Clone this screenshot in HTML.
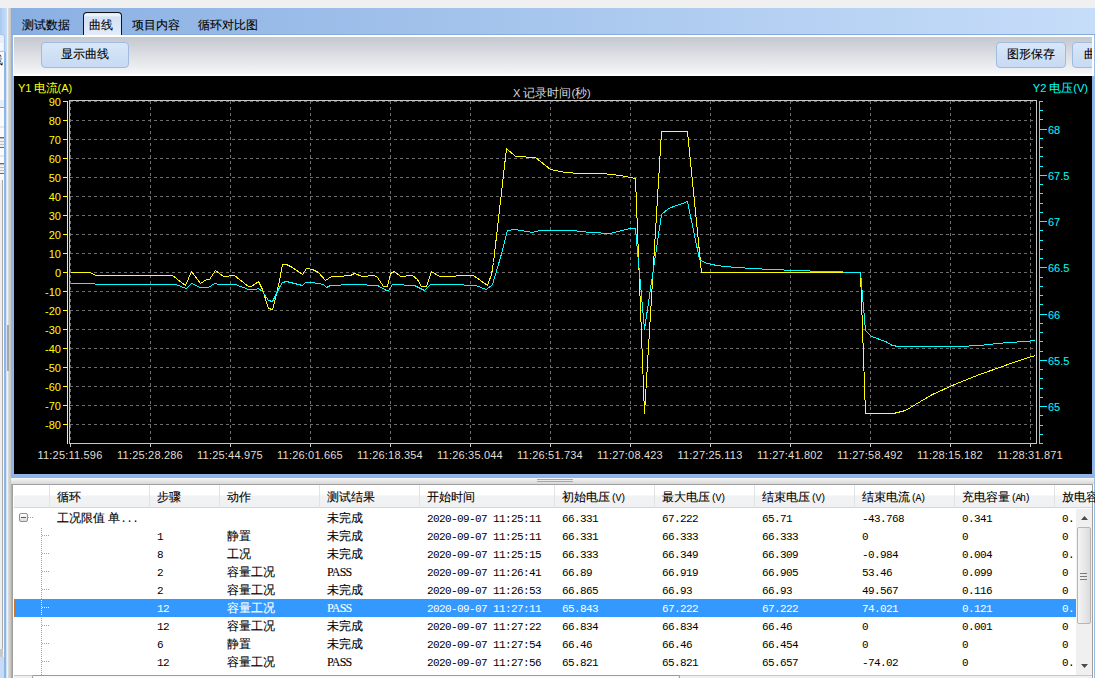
<!DOCTYPE html>
<html><head><meta charset="utf-8"><style>
*{margin:0;padding:0;box-sizing:border-box}
body .hc,body .dc,body .tab,body .btn{-webkit-text-stroke:0.1px currentColor}
body .m,body .m2,body .m3{-webkit-text-stroke:0}
html,body{width:1095px;height:678px;overflow:hidden;background:#f0f0f0;font-family:"Liberation Sans",sans-serif;font-size:12px;color:#000;position:relative}
.abs{position:absolute}
#leftstrip{position:absolute;left:0;top:8px;width:11px;height:670px;background:#dfe9f5}
#tabbar{position:absolute;left:11px;top:8px;width:1084px;height:27px;background:linear-gradient(90deg,#8ab0e2 0%,#c6ddf9 100%);border-bottom:1px solid #86abde}
.tab{position:absolute;top:18px;font-size:12px;line-height:14px;color:#000;font-weight:500}
#seltab{position:absolute;left:83px;top:12px;width:39px;height:24px;border:1px solid #101418;border-bottom:none;border-radius:4px 4px 0 0;background:linear-gradient(#d6e4f6 0,#f4f8fd 2px,#d4e2f5 4px,#e4ebf7 100%)}
#panel{position:absolute;left:11px;top:35px;width:1084px;height:643px;background:#fff;border-left:2px solid #8fb5e6;border-right:1px solid #9cbce6}
#toolbar{position:absolute;overflow:hidden;left:14px;top:35px;width:1078px;height:41px;background:linear-gradient(#ffffff 0px,#ffffff 2px,#c4c8cf 2px,#d9dce1 18px,#f5f6f8 39px,#ffffff 39px)}
.btn{position:absolute;top:7px;height:26px;font-weight:500;border:1px solid #9fbbe0;border-radius:4px;background:linear-gradient(#d9e7f8,#c6daf2);font-size:12px;line-height:23px;text-align:center;color:#000}
#chartframe{position:absolute;left:11px;top:76px;width:1083px;height:402px;background:#8fb5e6}
svg{position:absolute;left:0;top:0}
.g{stroke:#6c6c6c;stroke-width:1;stroke-dasharray:3 3}
text{font-family:"Liberation Sans",sans-serif;font-size:11px}
.y1{fill:#ffff00;text-anchor:end}
.y2{fill:#00ffff}
.xl{fill:#e0ddd0;text-anchor:middle;letter-spacing:0.2px}
.t1{fill:#ffff00;font-size:11px}
.t2{fill:#00ffff;text-anchor:end;font-size:11px}
.tt{fill:#d8d8d8;font-size:11px}
.cj{font-size:12px}
#splitter{position:absolute;left:11px;top:478px;width:1083px;height:6px;background:linear-gradient(#f6f6f6,#d8d8d8)}
#grip1,#grip2{position:absolute;left:526px;width:36px;height:1px;background:#a8a8a8}
#table{position:absolute;left:12px;top:484px;width:1081px;height:194px;background:#fff;border:1px solid #a0a0a0;border-bottom:none;overflow:hidden}
#thead{position:absolute;left:14px;top:485px;width:1078px;height:23px;background:linear-gradient(#ffffff 0%,#ffffff 45%,#f1f2f4 50%,#f0f1f3 100%);border-bottom:1px solid #d5d5d5}
.hc{position:absolute;top:485px;height:23px;border-left:1px solid #e2e3e6;padding-left:7px;line-height:25px;font-size:12px;white-space:nowrap;overflow:hidden}
.dc{position:absolute;height:18px;line-height:18px;font-size:12px;white-space:nowrap}
.sel{position:absolute;left:14px;width:1062px;height:18px;background:#3399ff}
.w{color:#fff}
.ps{font-family:"Liberation Serif",serif;font-size:12px;letter-spacing:-0.8px;margin-top:0px}
.m3{font-family:"Liberation Mono",monospace;font-size:11px;letter-spacing:-0.6px}
.m2{font-family:"Liberation Mono",monospace;font-size:10px;letter-spacing:-1.5px;margin-left:1px}
.m{font-family:"Liberation Mono",monospace;font-size:11px;letter-spacing:-0.6px;margin-top:1px}
.minus{position:absolute;left:19px;top:513px;width:9px;height:9px;border:1px solid #8e8f8f;border-radius:2px;background:linear-gradient(#fff,#dcdcdc)}
.minus:after{content:"";position:absolute;left:1px;top:3px;width:5px;height:1px;background:#3c5fa8}
.dotv{position:absolute;width:1px;background:repeating-linear-gradient(#a0a0a0 0 1px,transparent 1px 2px)}
.doth{position:absolute;height:1px;background:repeating-linear-gradient(90deg,#a0a0a0 0 1px,transparent 1px 2px)}
#vscroll{position:absolute;left:1076px;top:509px;width:16px;height:166px;background:#f0f0f0}
#thumb{position:absolute;left:1077px;top:527px;width:14px;height:97px;border:1px solid #b5b5b5;border-radius:2px;background:linear-gradient(90deg,#f5f5f5,#dcdcdc)}
#hscroll{position:absolute;left:14px;top:675px;width:1078px;height:3px;background:#f0f0f0;border-top:1px solid #c8c8c8}
#hthumb{position:absolute;left:32px;top:675px;width:648px;height:4px;border:1px solid #9a9a9a;border-bottom:none;border-radius:2px 2px 0 0;background:#fafafa}
</style></head><body>
<div class="abs" style="left:0;top:8px;width:7px;height:670px;background:linear-gradient(90deg,#a9c9f1,#c9def8)"></div>
<div class="abs" style="left:0;top:34px;width:5px;height:18px;background:#e6eef8;border:1px solid #a8c4e8;border-left:none;border-radius:0 3px 0 0"></div>
<div class="abs" style="left:0;top:43px;width:3px;height:7px;background:#f4f8fc"></div>
<div class="abs" style="left:0;top:52px;width:4px;height:626px;background:#fafafa"></div>
<div class="abs" style="left:0;top:180px;width:3px;height:469px;background:#f0f0f0;border-right:1px solid #a8a8a8"></div>
<div class="abs" style="left:4px;top:52px;width:2px;height:626px;background:#8fb5e6"></div>
<div class="abs" style="left:6px;top:52px;width:1px;height:626px;background:#cfe3fb"></div>
<div class="abs" style="left:7px;top:8px;width:4px;height:670px;background:linear-gradient(90deg,#f6f3ef 0,#f6f3ef 1px,#dedede 1px,#c4c1bd 4px)"></div>
<div class="abs" style="left:0;top:52px;width:3px;height:16px;font-size:12px;line-height:16px;overflow:hidden;direction:rtl">线</div>
<div class="abs" style="left:0;top:100px;width:4px;height:8px;background:#e6eef8;border-bottom:1px solid #a0a0a0"></div>
<div class="abs" style="left:0;top:126px;width:4px;height:2px;background:#dfe8f3"></div>
<div class="abs" style="left:0;top:137px;width:4px;height:11px;background:repeating-linear-gradient(#c0c0c0 0 1px,#f0f0f0 1px 3px);border-top:1px solid #806060;border-bottom:1px solid #806060"></div>
<div class="abs" style="left:0;top:155px;width:4px;height:2px;background:#dfe8f3"></div>
<div class="abs" style="left:0;top:163px;width:4px;height:11px;background:repeating-linear-gradient(#c0c0c0 0 1px,#f0f0f0 1px 3px);border-top:1px solid #806060;border-bottom:1px solid #806060"></div>
<div class="abs" style="left:7px;top:325px;width:2px;height:46px;background:#a8a8a8"></div>
<div class="abs" style="left:0;top:649px;width:3px;height:8px;background:#c8c8c8"></div>
<div class="abs" style="left:0;top:657px;width:4px;height:21px;background:#c6dbf6"></div>
<div class="abs" style="left:1092px;top:35px;width:3px;height:443px;background:linear-gradient(90deg,#c8e0fc 0,#c8e0fc 1px,#9cc0ec 1px,#9cc0ec 2px,#c4dcf8 2px)"></div>
<div id="tabbar"></div>
<div id="seltab"></div>
<div class="tab" style="left:22px">测试数据</div>
<div class="tab" style="left:89px">曲线</div>
<div class="tab" style="left:132px">项目内容</div>
<div class="tab" style="left:198px">循环对比图</div>
<div id="panel"></div>
<div id="toolbar"><div class="btn" style="left:27px;width:88px">显示曲线</div>
<div class="btn" style="left:982px;width:70px">图形保存</div>
<div class="btn" style="left:1058px;width:40px;text-align:left;padding-left:11px">曲线</div></div>
<div id="chartframe"></div>
<svg width="1095" height="678" viewBox="0 0 1095 678">
<rect x="14" y="76" width="1078" height="398" fill="#000"/>
<line x1="70" y1="101.5" x2="1036" y2="101.5" class="g"/>
<line x1="70" y1="120.5" x2="1036" y2="120.5" class="g"/>
<line x1="70" y1="139.5" x2="1036" y2="139.5" class="g"/>
<line x1="70" y1="158.5" x2="1036" y2="158.5" class="g"/>
<line x1="70" y1="177.5" x2="1036" y2="177.5" class="g"/>
<line x1="70" y1="196.5" x2="1036" y2="196.5" class="g"/>
<line x1="70" y1="215.5" x2="1036" y2="215.5" class="g"/>
<line x1="70" y1="234.5" x2="1036" y2="234.5" class="g"/>
<line x1="70" y1="253.5" x2="1036" y2="253.5" class="g"/>
<line x1="70" y1="272.5" x2="1036" y2="272.5" class="g"/>
<line x1="70" y1="291.5" x2="1036" y2="291.5" class="g"/>
<line x1="70" y1="310.5" x2="1036" y2="310.5" class="g"/>
<line x1="70" y1="329.5" x2="1036" y2="329.5" class="g"/>
<line x1="70" y1="348.5" x2="1036" y2="348.5" class="g"/>
<line x1="70" y1="367.5" x2="1036" y2="367.5" class="g"/>
<line x1="70" y1="386.5" x2="1036" y2="386.5" class="g"/>
<line x1="70" y1="405.5" x2="1036" y2="405.5" class="g"/>
<line x1="70" y1="424.5" x2="1036" y2="424.5" class="g"/>
<line x1="70.5" y1="101" x2="70.5" y2="443" class="g"/>
<line x1="150.5" y1="101" x2="150.5" y2="443" class="g"/>
<line x1="230.5" y1="101" x2="230.5" y2="443" class="g"/>
<line x1="310.5" y1="101" x2="310.5" y2="443" class="g"/>
<line x1="390.5" y1="101" x2="390.5" y2="443" class="g"/>
<line x1="470.5" y1="101" x2="470.5" y2="443" class="g"/>
<line x1="550.5" y1="101" x2="550.5" y2="443" class="g"/>
<line x1="630.5" y1="101" x2="630.5" y2="443" class="g"/>
<line x1="710.5" y1="101" x2="710.5" y2="443" class="g"/>
<line x1="790.5" y1="101" x2="790.5" y2="443" class="g"/>
<line x1="870.5" y1="101" x2="870.5" y2="443" class="g"/>
<line x1="950.5" y1="101" x2="950.5" y2="443" class="g"/>
<line x1="1030.5" y1="101" x2="1030.5" y2="443" class="g"/>
<rect x="69.5" y="100.5" width="967" height="343" fill="none" stroke="#c8c8c8" stroke-width="1"/>
<line x1="67.5" y1="101" x2="67.5" y2="444" stroke="#ffff00"/>
<line x1="63" y1="101.5" x2="67" y2="101.5" stroke="#ffff00"/>
<text x="61" y="106.0" class="y1">90</text>
<line x1="63" y1="120.5" x2="67" y2="120.5" stroke="#ffff00"/>
<text x="61" y="125.0" class="y1">80</text>
<line x1="63" y1="139.5" x2="67" y2="139.5" stroke="#ffff00"/>
<text x="61" y="144.0" class="y1">70</text>
<line x1="63" y1="158.5" x2="67" y2="158.5" stroke="#ffff00"/>
<text x="61" y="163.0" class="y1">60</text>
<line x1="63" y1="177.5" x2="67" y2="177.5" stroke="#ffff00"/>
<text x="61" y="182.0" class="y1">50</text>
<line x1="63" y1="196.5" x2="67" y2="196.5" stroke="#ffff00"/>
<text x="61" y="201.0" class="y1">40</text>
<line x1="63" y1="215.5" x2="67" y2="215.5" stroke="#ffff00"/>
<text x="61" y="220.0" class="y1">30</text>
<line x1="63" y1="234.5" x2="67" y2="234.5" stroke="#ffff00"/>
<text x="61" y="239.0" class="y1">20</text>
<line x1="63" y1="253.5" x2="67" y2="253.5" stroke="#ffff00"/>
<text x="61" y="258.0" class="y1">10</text>
<line x1="63" y1="272.5" x2="67" y2="272.5" stroke="#ffff00"/>
<text x="61" y="277.0" class="y1">0</text>
<line x1="63" y1="291.5" x2="67" y2="291.5" stroke="#ffff00"/>
<text x="61" y="296.0" class="y1">-10</text>
<line x1="63" y1="310.5" x2="67" y2="310.5" stroke="#ffff00"/>
<text x="61" y="315.0" class="y1">-20</text>
<line x1="63" y1="329.5" x2="67" y2="329.5" stroke="#ffff00"/>
<text x="61" y="334.0" class="y1">-30</text>
<line x1="63" y1="348.5" x2="67" y2="348.5" stroke="#ffff00"/>
<text x="61" y="353.0" class="y1">-40</text>
<line x1="63" y1="367.5" x2="67" y2="367.5" stroke="#ffff00"/>
<text x="61" y="372.0" class="y1">-50</text>
<line x1="63" y1="386.5" x2="67" y2="386.5" stroke="#ffff00"/>
<text x="61" y="391.0" class="y1">-60</text>
<line x1="63" y1="405.5" x2="67" y2="405.5" stroke="#ffff00"/>
<text x="61" y="410.0" class="y1">-70</text>
<line x1="63" y1="424.5" x2="67" y2="424.5" stroke="#ffff00"/>
<text x="61" y="429.0" class="y1">-80</text>
<line x1="70.5" y1="444" x2="70.5" y2="447" stroke="#c8c8c8"/>
<line x1="150.5" y1="444" x2="150.5" y2="447" stroke="#c8c8c8"/>
<line x1="230.5" y1="444" x2="230.5" y2="447" stroke="#c8c8c8"/>
<line x1="310.5" y1="444" x2="310.5" y2="447" stroke="#c8c8c8"/>
<line x1="390.5" y1="444" x2="390.5" y2="447" stroke="#c8c8c8"/>
<line x1="470.5" y1="444" x2="470.5" y2="447" stroke="#c8c8c8"/>
<line x1="550.5" y1="444" x2="550.5" y2="447" stroke="#c8c8c8"/>
<line x1="630.5" y1="444" x2="630.5" y2="447" stroke="#c8c8c8"/>
<line x1="710.5" y1="444" x2="710.5" y2="447" stroke="#c8c8c8"/>
<line x1="790.5" y1="444" x2="790.5" y2="447" stroke="#c8c8c8"/>
<line x1="870.5" y1="444" x2="870.5" y2="447" stroke="#c8c8c8"/>
<line x1="950.5" y1="444" x2="950.5" y2="447" stroke="#c8c8c8"/>
<line x1="1030.5" y1="444" x2="1030.5" y2="447" stroke="#c8c8c8"/>
<text x="70" y="459" class="xl">11:25:11.596</text>
<text x="150" y="459" class="xl">11:25:28.286</text>
<text x="230" y="459" class="xl">11:25:44.975</text>
<text x="310" y="459" class="xl">11:26:01.665</text>
<text x="390" y="459" class="xl">11:26:18.354</text>
<text x="470" y="459" class="xl">11:26:35.044</text>
<text x="550" y="459" class="xl">11:26:51.734</text>
<text x="630" y="459" class="xl">11:27:08.423</text>
<text x="710" y="459" class="xl">11:27:25.113</text>
<text x="790" y="459" class="xl">11:27:41.802</text>
<text x="870" y="459" class="xl">11:27:58.492</text>
<text x="950" y="459" class="xl">11:28:15.182</text>
<text x="1030" y="459" class="xl">11:28:31.871</text>
<line x1="1039.5" y1="101" x2="1039.5" y2="444" stroke="#00ffff"/>
<line x1="1039" y1="101.5" x2="1043" y2="101.5" stroke="#00ffff"/>
<line x1="1039" y1="110.5" x2="1043" y2="110.5" stroke="#00ffff"/>
<line x1="1039" y1="119.5" x2="1043" y2="119.5" stroke="#00ffff"/>
<line x1="1039" y1="129.5" x2="1047" y2="129.5" stroke="#00ffff"/>
<text x="1048" y="134.0" class="y2">68</text>
<line x1="1039" y1="138.5" x2="1043" y2="138.5" stroke="#00ffff"/>
<line x1="1039" y1="147.5" x2="1043" y2="147.5" stroke="#00ffff"/>
<line x1="1039" y1="156.5" x2="1043" y2="156.5" stroke="#00ffff"/>
<line x1="1039" y1="166.5" x2="1043" y2="166.5" stroke="#00ffff"/>
<line x1="1039" y1="175.5" x2="1047" y2="175.5" stroke="#00ffff"/>
<text x="1048" y="180.0" class="y2">67.5</text>
<line x1="1039" y1="184.5" x2="1043" y2="184.5" stroke="#00ffff"/>
<line x1="1039" y1="193.5" x2="1043" y2="193.5" stroke="#00ffff"/>
<line x1="1039" y1="203.5" x2="1043" y2="203.5" stroke="#00ffff"/>
<line x1="1039" y1="212.5" x2="1043" y2="212.5" stroke="#00ffff"/>
<line x1="1039" y1="221.5" x2="1047" y2="221.5" stroke="#00ffff"/>
<text x="1048" y="226.0" class="y2">67</text>
<line x1="1039" y1="230.5" x2="1043" y2="230.5" stroke="#00ffff"/>
<line x1="1039" y1="240.5" x2="1043" y2="240.5" stroke="#00ffff"/>
<line x1="1039" y1="249.5" x2="1043" y2="249.5" stroke="#00ffff"/>
<line x1="1039" y1="258.5" x2="1043" y2="258.5" stroke="#00ffff"/>
<line x1="1039" y1="267.5" x2="1047" y2="267.5" stroke="#00ffff"/>
<text x="1048" y="272.0" class="y2">66.5</text>
<line x1="1039" y1="277.5" x2="1043" y2="277.5" stroke="#00ffff"/>
<line x1="1039" y1="286.5" x2="1043" y2="286.5" stroke="#00ffff"/>
<line x1="1039" y1="295.5" x2="1043" y2="295.5" stroke="#00ffff"/>
<line x1="1039" y1="304.5" x2="1043" y2="304.5" stroke="#00ffff"/>
<line x1="1039" y1="314.5" x2="1047" y2="314.5" stroke="#00ffff"/>
<text x="1048" y="319.0" class="y2">66</text>
<line x1="1039" y1="323.5" x2="1043" y2="323.5" stroke="#00ffff"/>
<line x1="1039" y1="332.5" x2="1043" y2="332.5" stroke="#00ffff"/>
<line x1="1039" y1="341.5" x2="1043" y2="341.5" stroke="#00ffff"/>
<line x1="1039" y1="351.5" x2="1043" y2="351.5" stroke="#00ffff"/>
<line x1="1039" y1="360.5" x2="1047" y2="360.5" stroke="#00ffff"/>
<text x="1048" y="365.0" class="y2">65.5</text>
<line x1="1039" y1="369.5" x2="1043" y2="369.5" stroke="#00ffff"/>
<line x1="1039" y1="378.5" x2="1043" y2="378.5" stroke="#00ffff"/>
<line x1="1039" y1="388.5" x2="1043" y2="388.5" stroke="#00ffff"/>
<line x1="1039" y1="397.5" x2="1043" y2="397.5" stroke="#00ffff"/>
<line x1="1039" y1="406.5" x2="1047" y2="406.5" stroke="#00ffff"/>
<text x="1048" y="411.0" class="y2">65</text>
<line x1="1039" y1="415.5" x2="1043" y2="415.5" stroke="#00ffff"/>
<line x1="1039" y1="425.5" x2="1043" y2="425.5" stroke="#00ffff"/>
<line x1="1039" y1="434.5" x2="1043" y2="434.5" stroke="#00ffff"/>
<line x1="1039" y1="443.5" x2="1043" y2="443.5" stroke="#00ffff"/>
<text x="18" y="92" class="t1">Y1 <tspan class="cj" dx="-1">电流</tspan>(A)</text>
<text x="1088" y="92" class="t2">Y2 <tspan class="cj">电压</tspan>(V)</text>
<text x="513" y="97" class="tt">X <tspan class="cj">记录时间</tspan>(<tspan class="cj">秒</tspan>)</text>
<polyline points="70.5,272.5 90.5,272.5 95.5,275.5 172.5,275.5 181.5,282.5 185.5,285.5 191.5,271.5 200.5,283.5 206.5,279.5 209.5,279.5 215.5,270.5 223.5,276.5 234.5,275.5 248.5,286.5 251.5,286.5 258.5,281.5 262.5,289.5 268.5,308.5 272.5,309.5 275.5,298.5 279.5,280.5 282.5,264.5 286.5,264.5 292.5,267.5 302.5,274.5 306.5,268.5 312.5,269.5 318.5,272.5 325.5,280.5 331.5,276.5 337.5,276.5 350.5,275.5 354.5,273.5 362.5,276.5 374.5,275.5 377.5,277.5 383.5,286.5 387.5,286.5 390.5,273.5 394.5,271.5 400.5,276.5 412.5,275.5 417.5,279.5 421.5,286.5 426.5,286.5 431.5,271.5 439.5,276.5 473.5,275.5 487.5,285.5 491.5,274.5 493.5,262.5 506.5,148.5 515.5,156.5 535.5,157.5 550.5,169.5 565.5,172.5 580.5,173.5 602.5,173.5 620.5,175.5 635.5,178.5 644.5,413.5 661.5,131.5 687.5,131.5 701.5,272.5 860.5,272.5 865.5,413.5 893.5,413.5 905.5,410.5 920.5,401.5 932.5,394.5 954.5,384.5 979.5,374.5 1002.5,366.5 1013.5,362.5 1028.5,357.5 1035.5,355.5" fill="none" stroke="#ffff00" stroke-width="1" shape-rendering="crispEdges"/>
<polyline points="70.5,283.5 94.5,283.5 95.5,284.5 175.5,284.5 186.5,288.5 191.5,283.5 200.5,287.5 208.5,287.5 214.5,283.5 219.5,284.5 235.5,284.5 248.5,289.5 255.5,289.5 258.5,288.5 262.5,291.5 268.5,300.5 272.5,301.5 279.5,287.5 282.5,282.5 286.5,281.5 302.5,285.5 305.5,282.5 312.5,282.5 323.5,284.5 326.5,287.5 330.5,285.5 352.5,284.5 355.5,284.5 377.5,285.5 386.5,290.5 388.5,290.5 392.5,284.5 414.5,285.5 424.5,290.5 430.5,284.5 452.5,284.5 475.5,285.5 486.5,289.5 492.5,284.5 500.5,257.5 507.5,230.5 515.5,229.5 532.5,232.5 539.5,230.5 572.5,230.5 590.5,232.5 610.5,233.5 625.5,229.5 630.5,228.5 635.5,228.5 644.5,329.5 661.5,214.5 668.5,208.5 676.5,205.5 682.5,203.5 687.5,201.5 699.5,259.5 704.5,262.5 711.5,264.5 723.5,266.5 751.5,268.5 771.5,269.5 795.5,270.5 824.5,271.5 860.5,272.5 865.5,330.5 871.5,336.5 885.5,341.5 892.5,345.5 898.5,346.5 959.5,346.5 979.5,345.5 997.5,343.5 1009.5,342.5 1025.5,341.5 1035.5,340.5" fill="none" stroke="#00ffff" stroke-width="1" shape-rendering="crispEdges"/>
</svg>
<div id="splitter"><div id="grip1" style="top:1px"></div><div id="grip2" style="top:3px"></div></div>
<div id="table"></div>
<div id="thead"></div>
<div class="hc" style="left:49px;width:100px">循环</div>
<div class="hc" style="left:149px;width:70px">步骤</div>
<div class="hc" style="left:219px;width:100px">动作</div>
<div class="hc" style="left:319px;width:100px">测试结果</div>
<div class="hc" style="left:419px;width:135px">开始时间</div>
<div class="hc" style="left:554px;width:100px">初始电压<span class="m2">(V)</span></div>
<div class="hc" style="left:654px;width:100px">最大电压<span class="m2">(V)</span></div>
<div class="hc" style="left:754px;width:100px">结束电压<span class="m2">(V)</span></div>
<div class="hc" style="left:854px;width:100px">结束电流<span class="m2">(A)</span></div>
<div class="hc" style="left:954px;width:100px">充电容量<span class="m2">(Ah)</span></div>
<div class="hc" style="left:1054px;width:106px">放电容量</div>
<div class="dc" style="left:57px;top:509px">工况限值 单<span class="m3">...</span></div>
<div class="dc" style="left:327px;top:509px">未完成</div>
<div class="dc m" style="left:427px;top:509px">2020-09-07 11:25:11</div>
<div class="dc m" style="left:562px;top:509px">66.331</div>
<div class="dc m" style="left:662px;top:509px">67.222</div>
<div class="dc m" style="left:762px;top:509px">65.71</div>
<div class="dc m" style="left:862px;top:509px">-43.768</div>
<div class="dc m" style="left:962px;top:509px">0.341</div>
<div class="dc m" style="left:1062px;top:509px">0.</div>
<div class="dc m" style="left:157px;top:527px">1</div>
<div class="dc" style="left:227px;top:527px">静置</div>
<div class="dc" style="left:327px;top:527px">未完成</div>
<div class="dc m" style="left:427px;top:527px">2020-09-07 11:25:11</div>
<div class="dc m" style="left:562px;top:527px">66.331</div>
<div class="dc m" style="left:662px;top:527px">66.333</div>
<div class="dc m" style="left:762px;top:527px">66.333</div>
<div class="dc m" style="left:862px;top:527px">0</div>
<div class="dc m" style="left:962px;top:527px">0</div>
<div class="dc m" style="left:1062px;top:527px">0</div>
<div class="dc m" style="left:157px;top:545px">8</div>
<div class="dc" style="left:227px;top:545px">工况</div>
<div class="dc" style="left:327px;top:545px">未完成</div>
<div class="dc m" style="left:427px;top:545px">2020-09-07 11:25:15</div>
<div class="dc m" style="left:562px;top:545px">66.333</div>
<div class="dc m" style="left:662px;top:545px">66.349</div>
<div class="dc m" style="left:762px;top:545px">66.309</div>
<div class="dc m" style="left:862px;top:545px">-0.984</div>
<div class="dc m" style="left:962px;top:545px">0.004</div>
<div class="dc m" style="left:1062px;top:545px">0.</div>
<div class="dc m" style="left:157px;top:563px">2</div>
<div class="dc" style="left:227px;top:563px">容量工况</div>
<div class="dc ps" style="left:327px;top:563px">PASS</div>
<div class="dc m" style="left:427px;top:563px">2020-09-07 11:26:41</div>
<div class="dc m" style="left:562px;top:563px">66.89</div>
<div class="dc m" style="left:662px;top:563px">66.919</div>
<div class="dc m" style="left:762px;top:563px">66.905</div>
<div class="dc m" style="left:862px;top:563px">53.46</div>
<div class="dc m" style="left:962px;top:563px">0.099</div>
<div class="dc m" style="left:1062px;top:563px">0</div>
<div class="dc m" style="left:157px;top:581px">2</div>
<div class="dc" style="left:227px;top:581px">容量工况</div>
<div class="dc" style="left:327px;top:581px">未完成</div>
<div class="dc m" style="left:427px;top:581px">2020-09-07 11:26:53</div>
<div class="dc m" style="left:562px;top:581px">66.865</div>
<div class="dc m" style="left:662px;top:581px">66.93</div>
<div class="dc m" style="left:762px;top:581px">66.93</div>
<div class="dc m" style="left:862px;top:581px">49.567</div>
<div class="dc m" style="left:962px;top:581px">0.116</div>
<div class="dc m" style="left:1062px;top:581px">0</div>
<div class="sel" style="top:599px"></div>
<div class="dc m w" style="left:157px;top:599px">12</div>
<div class="dc w" style="left:227px;top:599px">容量工况</div>
<div class="dc ps w" style="left:327px;top:599px">PASS</div>
<div class="dc m w" style="left:427px;top:599px">2020-09-07 11:27:11</div>
<div class="dc m w" style="left:562px;top:599px">65.843</div>
<div class="dc m w" style="left:662px;top:599px">67.222</div>
<div class="dc m w" style="left:762px;top:599px">67.222</div>
<div class="dc m w" style="left:862px;top:599px">74.021</div>
<div class="dc m w" style="left:962px;top:599px">0.121</div>
<div class="dc m w" style="left:1062px;top:599px">0.</div>
<div class="dc m" style="left:157px;top:617px">12</div>
<div class="dc" style="left:227px;top:617px">容量工况</div>
<div class="dc" style="left:327px;top:617px">未完成</div>
<div class="dc m" style="left:427px;top:617px">2020-09-07 11:27:22</div>
<div class="dc m" style="left:562px;top:617px">66.834</div>
<div class="dc m" style="left:662px;top:617px">66.834</div>
<div class="dc m" style="left:762px;top:617px">66.46</div>
<div class="dc m" style="left:862px;top:617px">0</div>
<div class="dc m" style="left:962px;top:617px">0.001</div>
<div class="dc m" style="left:1062px;top:617px">0</div>
<div class="dc m" style="left:157px;top:635px">6</div>
<div class="dc" style="left:227px;top:635px">静置</div>
<div class="dc" style="left:327px;top:635px">未完成</div>
<div class="dc m" style="left:427px;top:635px">2020-09-07 11:27:54</div>
<div class="dc m" style="left:562px;top:635px">66.46</div>
<div class="dc m" style="left:662px;top:635px">66.46</div>
<div class="dc m" style="left:762px;top:635px">66.454</div>
<div class="dc m" style="left:862px;top:635px">0</div>
<div class="dc m" style="left:962px;top:635px">0</div>
<div class="dc m" style="left:1062px;top:635px">0</div>
<div class="dc m" style="left:157px;top:653px">12</div>
<div class="dc" style="left:227px;top:653px">容量工况</div>
<div class="dc ps" style="left:327px;top:653px">PASS</div>
<div class="dc m" style="left:427px;top:653px">2020-09-07 11:27:56</div>
<div class="dc m" style="left:562px;top:653px">65.821</div>
<div class="dc m" style="left:662px;top:653px">65.821</div>
<div class="dc m" style="left:762px;top:653px">65.657</div>
<div class="dc m" style="left:862px;top:653px">-74.02</div>
<div class="dc m" style="left:962px;top:653px">0</div>
<div class="dc m" style="left:1062px;top:653px">0.</div>
<div class="minus"></div>
<div class="dotv" style="left:41px;top:528px;height:147px"></div>
<div class="doth" style="left:42px;top:535px;width:7px"></div>
<div class="doth" style="left:42px;top:553px;width:7px"></div>
<div class="doth" style="left:42px;top:571px;width:7px"></div>
<div class="doth" style="left:42px;top:589px;width:7px"></div>
<div class="doth" style="left:42px;top:607px;width:7px"></div>
<div class="doth" style="left:42px;top:625px;width:7px"></div>
<div class="doth" style="left:42px;top:643px;width:7px"></div>
<div class="doth" style="left:42px;top:661px;width:7px"></div>
<div class="doth" style="left:28px;top:517px;width:6px"></div>
<div class="abs" style="left:41px;top:600px;width:1px;height:17px;background:repeating-linear-gradient(#fff 0 1px,transparent 1px 2px)"></div>
<div class="abs" style="left:42px;top:607px;width:7px;height:1px;background:repeating-linear-gradient(90deg,#fff 0 1px,transparent 1px 2px)"></div>
<div class="abs" style="left:14px;top:599px;width:36px;height:18px;border:1px dotted #c87832"></div>
<div id="vscroll"></div>
<div id="thumb"></div>
<svg width="1095" height="678" style="position:absolute;left:0;top:0">
<path d="M1081 520 L1084.5 516 L1088 520 Z" fill="#4a4a4a"/>
<path d="M1081 664 L1088 664 L1084.5 668 Z" fill="#4a4a4a"/>
<line x1="1080" y1="573.5" x2="1087" y2="573.5" stroke="#7a7a7a"/>
<line x1="1080" y1="576.5" x2="1087" y2="576.5" stroke="#7a7a7a"/>
<line x1="1080" y1="579.5" x2="1087" y2="579.5" stroke="#7a7a7a"/>
</svg>
<div id="hscroll"></div>
<div id="hthumb"></div>
</body></html>
